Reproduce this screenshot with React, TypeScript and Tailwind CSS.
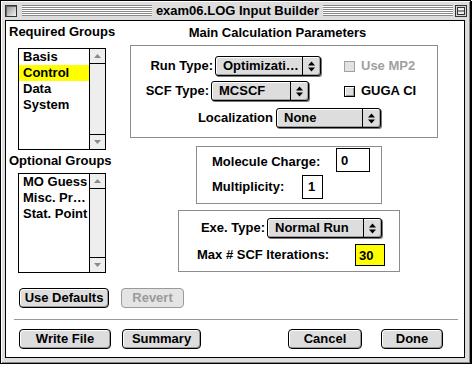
import React from 'react';

function Popup({ text, className }: { text: string; className: string }) {
  return (
    <div className={`flex h-[20px] shrink-0 rounded-[3px] border border-black bg-[#dddddd] shadow-[inset_1px_1px_0_#ffffff,inset_-1px_-1px_0_#a0a0a0,1px_1px_0_#777777] ${className}`}>
      <span className="flex-1 overflow-hidden whitespace-nowrap pl-[7px] leading-[18px]">{text}</span>
      <span className="flex w-[18px] items-center justify-center border-l border-black">
        <svg width="7" height="11" viewBox="0 0 7 11">
          <path d="M3.5 0.5L7 4.5H0Z M0 6.5H7L3.5 10.5Z" fill="#000" />
        </svg>
      </span>
    </div>
  );
}

function Check({ label, disabled = false }: { label: string; disabled?: boolean }) {
  return (
    <div className={`flex items-center gap-[6px] ${disabled ? 'text-[#a0a0a0]' : ''}`}>
      <span
        className={`h-[11px] w-[11px] border ${disabled ? 'border-[#a0a0a0] bg-[#e2e2e2]' : 'border-black bg-[#dddddd] shadow-[inset_1px_1px_0_#ffffff,inset_-1px_-1px_0_#999999]'}`}
      />
      <span className="leading-[16px]">{label}</span>
    </div>
  );
}

function Btn({ label, className, disabled = false }: { label: string; className: string; disabled?: boolean }) {
  return (
    <div
      className={`flex h-[20px] items-center justify-center rounded-[4px] border leading-[16px] ${
        disabled
          ? 'border-[#9a9a9a] bg-[#e4e4e4] text-[#9a9a9a]'
          : 'border-black bg-[#dddddd] shadow-[inset_1px_1px_0_#ffffff,inset_-1px_-1px_0_#999999]'
      } ${className}`}
    >
      {label}
    </div>
  );
}

function ListBox({ items, selected, className }: { items: string[]; selected?: string; className: string }) {
  return (
    <div className={`ml-[12px] flex w-[88px] border border-black bg-white ${className}`}>
      <div className="min-w-0 flex-1">
        {items.map((it) => (
          <div
            key={it}
            className={`h-[16px] overflow-hidden whitespace-nowrap pl-[4px] leading-[16px] ${it === selected ? 'bg-[#ffff00]' : ''}`}
          >
            {it}
          </div>
        ))}
      </div>
      <div className="flex w-[16px] flex-col border-l border-black bg-[#eeeeee]">
        <div className="flex h-[15px] items-center justify-center border-b border-black">
          <svg width="7" height="4" viewBox="0 0 7 4"><path d="M3.5 0L7 4H0Z" fill="#8a8a8a" /></svg>
        </div>
        <div className="flex-1" />
        <div className="flex h-[15px] items-center justify-center border-t border-black">
          <svg width="7" height="4" viewBox="0 0 7 4"><path d="M0 0H7L3.5 4Z" fill="#8a8a8a" /></svg>
        </div>
      </div>
    </div>
  );
}

export default function App() {
  return (
    <div className="font-['Liberation_Sans',Arial,sans-serif] text-[13px] font-bold text-black">
      <div className="flex h-[364px] w-[471px] flex-col border border-black bg-[#dddddd] shadow-[inset_1px_1px_0_#ffffff,inset_-1px_-1px_0_#888888,1px_1px_0_#000000]">
        {/* title bar */}
        <div className="flex h-[19px] items-center pl-[4px] pr-[3px]">
          <span className="h-[12px] w-[12px] border border-[#333333] bg-[linear-gradient(135deg,#8a8a8a,#f4f4f4)] shadow-[inset_1px_1px_0_#666666]" />
          <span className="ml-[5px] h-[11px] flex-1 bg-[repeating-linear-gradient(to_bottom,#888888_0px,#888888_1px,#ffffff_1px,#ffffff_2px)]" />
          <span className="px-[4px] leading-[16px]">exam06.LOG Input Builder</span>
          <span className="h-[11px] flex-1 bg-[repeating-linear-gradient(to_bottom,#888888_0px,#888888_1px,#ffffff_1px,#ffffff_2px)]" />
          <svg className="ml-[2px]" width="12" height="12" viewBox="0 0 12 12">
            <rect x="0.5" y="0.5" width="11" height="11" fill="#d4d4d4" stroke="#333" />
            <rect x="2.5" y="2.5" width="7" height="7" fill="#eeeeee" stroke="#333" />
            <line x1="2.5" y1="6" x2="9.5" y2="6" stroke="#333" />
          </svg>
        </div>

        {/* content */}
        <div className="flex pl-[4px]">
          <div className="flex h-[338px] w-[460px] flex-col border border-black bg-white">
            <div className="flex">
              <div className="flex w-[124px] flex-col">
                <div className="mt-[3px] pl-[3px] leading-[16px]">Required Groups</div>
                <ListBox className="mt-[8px] h-[102px]" items={['Basis', 'Control', 'Data', 'System']} selected="Control" />
                <div className="mt-[3px] pl-[3px] leading-[16px]">Optional Groups</div>
                <ListBox className="mt-[4px] h-[100px]" items={['MO Guess', 'Misc. Pr…', 'Stat. Point']} />
              </div>

              <div className="flex flex-1 flex-col">
                <div className="mt-[4px] w-[307px] pr-[12px] text-center leading-[16px]">Main Calculation Parameters</div>
                <div className="mt-[4px] flex h-[93px] w-[308px] flex-col border border-[#8c8c8c]">
                  <div className="mt-[10px] flex h-[20px] items-center">
                    <span className="w-[82px] text-right leading-[16px]">Run Type:</span>
                    <Popup text="Optimizati…" className="ml-[2px] w-[106px]" />
                    <div className="ml-[23px]">
                      <Check label="Use MP2" disabled />
                    </div>
                  </div>
                  <div className="mt-[5px] flex h-[20px] items-center">
                    <span className="w-[78px] text-right leading-[16px]">SCF Type:</span>
                    <Popup text="MCSCF" className="ml-[2px] w-[98px]" />
                    <div className="ml-[35px]">
                      <Check label="GUGA CI" />
                    </div>
                  </div>
                  <div className="mt-[7px] flex h-[20px] items-center">
                    <span className="w-[142px] text-right leading-[16px]">Localization</span>
                    <Popup text="None" className="ml-[3px] w-[105px]" />
                  </div>
                </div>

                <div className="ml-[66px] mt-[8px] flex h-[58px] w-[186px] flex-col border border-[#8c8c8c] pl-[15px]">
                  <div className="mt-[1px] flex h-[24px] items-center">
                    <span className="w-[124px] pt-[3px] leading-[16px]">Molecule Charge:</span>
                    <span className="h-[24px] w-[34px] border border-black pl-[4px] pt-[4px] leading-[16px]">0</span>
                  </div>
                  <div className="mt-[3px] flex h-[24px] items-center">
                    <span className="w-[90px] leading-[16px]">Multiplicity:</span>
                    <span className="h-[24px] w-[21px] border border-black pl-[5px] pt-[3px] leading-[16px]">1</span>
                  </div>
                </div>

                <div className="ml-[48px] mt-[6px] flex h-[62px] w-[222px] flex-col border border-[#8c8c8c]">
                  <div className="mt-[7px] flex h-[20px] items-center">
                    <span className="w-[86px] text-right leading-[16px]">Exe. Type:</span>
                    <Popup text="Normal Run" className="ml-[2px] w-[115px]" />
                  </div>
                  <div className="mt-[6px] flex h-[22px] items-center pl-[18px]">
                    <span className="w-[158px] leading-[16px]">Max # SCF Iterations:</span>
                    <span className="h-[22px] w-[30px] border border-black bg-[#ffff00] pl-[3px] pt-[3px] leading-[16px]">30</span>
                  </div>
                </div>
              </div>
            </div>

            <div className="mt-[15px] flex pl-[13px]">
              <Btn label="Use Defaults" className="w-[90px]" />
              <Btn label="Revert" className="ml-[12px] w-[63px]" disabled />
            </div>

            <div className="ml-[8px] mt-[11px] h-px w-[444px] bg-[#999999]" />

            <div className="mt-[9px] flex pl-[13px]">
              <Btn label="Write File" className="w-[92px]" />
              <Btn label="Summary" className="ml-[11px] w-[79px]" />
              <Btn label="Cancel" className="ml-[87px] w-[74px]" />
              <Btn label="Done" className="ml-[19px] w-[62px]" />
            </div>
          </div>
        </div>
      </div>
    </div>
  );
}
